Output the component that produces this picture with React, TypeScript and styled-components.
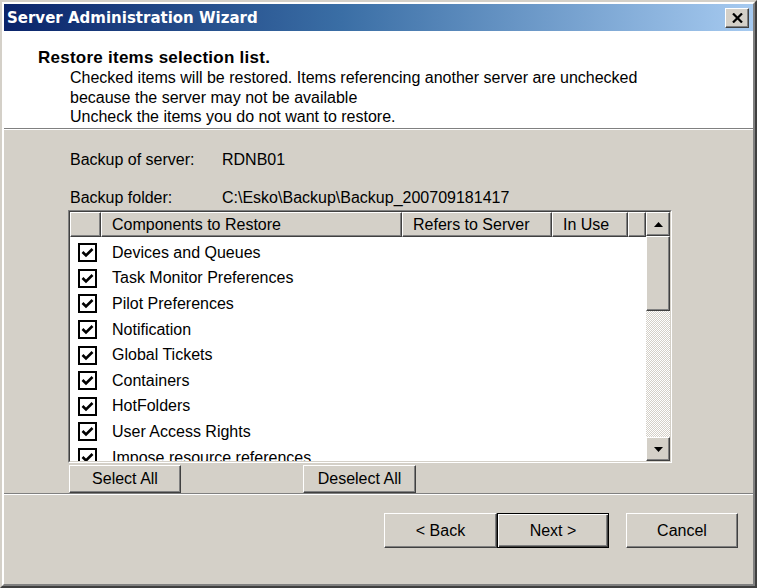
import React from "react";
import styled, { createGlobalStyle, css } from "styled-components";

const GlobalStyle = createGlobalStyle`
  html, body { margin: 0; padding: 0; background: #d4d0c8; }
  * { box-sizing: border-box; }
  body { font-family: "Liberation Sans", Arial, sans-serif; }
`;

const raisedEdge = css`
  background: #d4d0c8;
  border: 1px solid;
  border-color: #ffffff #404040 #404040 #ffffff;
  box-shadow: inset -1px -1px #808080;
`;

const Frame = styled.div`
  width: 757px;
  height: 588px;
  border: 2px solid;
  border-color: #d4d0c8 #404040 #404040 #d4d0c8;
  background: #d4d0c8;
`;

const FrameInner = styled.div`
  height: 100%;
  border: 2px solid;
  border-color: #ffffff #808080 #808080 #ffffff;
  display: flex;
  flex-direction: column;
`;

const TitleBar = styled.div`
  height: 27px;
  flex: none;
  display: flex;
  align-items: center;
  justify-content: space-between;
  padding: 0 4px 0 3px;
  background: linear-gradient(to right, #0a246a 0%, #3a6ea5 45%, #a6caf0 100%);
`;

const TitleText = styled.span`
  font-family: "DejaVu Sans", Verdana, sans-serif;
  font-weight: bold;
  font-size: 15px;
  color: #ffffff;
  white-space: nowrap;
`;

const CloseButton = styled.div`
  ${raisedEdge};
  width: 24px;
  height: 20px;
  display: flex;
  align-items: center;
  justify-content: center;
`;

const Header = styled.div`
  height: 97px;
  flex: none;
  background: #ffffff;
  padding: 17px 0 0 34px;
  color: #000;
`;

const HeaderTitle = styled.div`
  font-weight: bold;
  font-size: 17px;
  line-height: 20px;
  letter-spacing: 0.25px;
`;

const HeaderDesc = styled.div`
  padding-left: 32px;
  font-size: 16px;
  line-height: 19.5px;
`;

const Separator = styled.div`
  height: 2px;
  flex: none;
  border-top: 1px solid #808080;
  border-bottom: 1px solid #ffffff;
`;

const Body = styled.div`
  flex: 1;
  display: flex;
  flex-direction: column;
  align-items: flex-start;
  padding: 21px 0 0 64px;
`;

const InfoRow = styled.div<{ $gap?: number }>`
  display: grid;
  grid-template-columns: 152px auto;
  padding-left: 2px;
  margin-top: ${(p) => p.$gap ?? 0}px;
  font-size: 16px;
  line-height: 18px;
  color: #000;
  white-space: nowrap;
`;

const ListOuter = styled.div`
  margin-top: 3px;
  width: 604px;
  height: 253px;
  border: 1px solid;
  border-color: #808080 #ffffff #ffffff #808080;
`;

const ListInner = styled.div`
  height: 100%;
  border: 1px solid;
  border-color: #404040 #d4d0c8 #d4d0c8 #404040;
  background: #ffffff;
  display: flex;
  overflow: hidden;
`;

const ListContent = styled.div`
  flex: 1;
  display: flex;
  flex-direction: column;
  min-width: 0;
`;

const HeaderRow = styled.div`
  height: 25px;
  flex: none;
  display: grid;
  grid-template-columns: 31px 301px 150px 76px 1fr;
`;

const HeaderCell = styled.div`
  ${raisedEdge};
  padding-left: 10px;
  font-size: 16px;
  line-height: 23px;
  color: #000;
  white-space: nowrap;
  overflow: hidden;
`;

const Rows = styled.div`
  flex: 1;
  overflow: hidden;
  padding-top: 3px;
`;

const Row = styled.div`
  height: 25.6px;
  display: flex;
  align-items: center;
  padding-left: 8px;
  font-size: 16px;
  color: #000;
  white-space: nowrap;
`;

const CheckBox = styled.div`
  width: 19px;
  height: 19px;
  flex: none;
  border: 2px solid #000;
  background: #fff;
  margin-right: 15px;
  display: flex;
  align-items: center;
  justify-content: center;
`;

const ScrollBar = styled.div`
  width: 24px;
  flex: none;
  display: flex;
  flex-direction: column;
  background-color: #ffffff;
  background-image: conic-gradient(#d4d0c8 25%, transparent 0 50%, #d4d0c8 0 75%, transparent 0);
  background-size: 2px 2px;
`;

const ScrollButton = styled.div`
  ${raisedEdge};
  width: 24px;
  height: 24px;
  flex: none;
  display: flex;
  align-items: center;
  justify-content: center;
`;

const Thumb = styled.div`
  ${raisedEdge};
  width: 24px;
  height: 75px;
  flex: none;
`;

const Track = styled.div`
  flex: 1;
`;

const ButtonRow = styled.div`
  margin-top: 2px;
  margin-left: 1px;
  display: flex;
  gap: 122px;
`;

const Button = styled.div<{ $w: number; $h: number; $default?: boolean }>`
  width: ${(p) => p.$w}px;
  height: ${(p) => p.$h}px;
  flex: none;
  display: flex;
  align-items: center;
  justify-content: center;
  font-size: 16px;
  color: #000;
  background: #d4d0c8;
  white-space: nowrap;
  ${(p) =>
    p.$default
      ? css`
          border: 1px solid #000;
          box-shadow: inset 1px 1px #ffffff, inset -1px -1px #404040, inset -2px -2px #808080;
        `
      : css`
          border: 1px solid;
          border-color: #ffffff #404040 #404040 #ffffff;
          box-shadow: inset -1px -1px #808080;
        `}
`;

const Footer = styled.div`
  flex: 1;
  display: flex;
  justify-content: flex-end;
  align-items: flex-start;
  padding: 18px 15px 0 0;
`;

const CancelWrap = styled.div`
  margin-left: 17px;
`;

const CheckMark = () => (
  <svg width="13" height="11" viewBox="0 0 13 11">
    <path d="M1.5 5 L5 8.5 L11.5 2" fill="none" stroke="#000" strokeWidth="2.6" />
  </svg>
);

const ArrowUp = () => (
  <svg width="9" height="5" viewBox="0 0 9 5">
    <path d="M4.5 0 L9 5 L0 5 Z" fill="#000" />
  </svg>
);

const ArrowDown = () => (
  <svg width="9" height="5" viewBox="0 0 9 5">
    <path d="M0 0 L9 0 L4.5 5 Z" fill="#000" />
  </svg>
);

const CloseIcon = () => (
  <svg width="11" height="10" viewBox="0 0 11 10">
    <path d="M1 0.5 L10 9.5 M10 0.5 L1 9.5" stroke="#000" strokeWidth="2.2" />
  </svg>
);

const items = [
  "Devices and Queues",
  "Task Monitor Preferences",
  "Pilot Preferences",
  "Notification",
  "Global Tickets",
  "Containers",
  "HotFolders",
  "User Access Rights",
  "Impose resource references",
];

export default function App() {
  return (
    <>
      <GlobalStyle />
      <Frame>
        <FrameInner>
          <TitleBar>
            <TitleText>Server Administration Wizard</TitleText>
            <CloseButton>
              <CloseIcon />
            </CloseButton>
          </TitleBar>
          <Header>
            <HeaderTitle>Restore items selection list.</HeaderTitle>
            <HeaderDesc>
              Checked items will be restored. Items referencing another server are unchecked
              <br />
              because the server may not be available
              <br />
              Uncheck the items you do not want to restore.
            </HeaderDesc>
          </Header>
          <Separator />
          <Body>
            <InfoRow>
              <span>Backup of server:</span>
              <span>RDNB01</span>
            </InfoRow>
            <InfoRow $gap={20}>
              <span>Backup folder:</span>
              <span>C:\Esko\Backup\Backup_200709181417</span>
            </InfoRow>
            <ListOuter>
              <ListInner>
                <ListContent>
                  <HeaderRow>
                    <HeaderCell />
                    <HeaderCell>Components to Restore</HeaderCell>
                    <HeaderCell>Refers to Server</HeaderCell>
                    <HeaderCell>In Use</HeaderCell>
                    <HeaderCell />
                  </HeaderRow>
                  <Rows>
                    {items.map((it) => (
                      <Row key={it}>
                        <CheckBox>
                          <CheckMark />
                        </CheckBox>
                        {it}
                      </Row>
                    ))}
                  </Rows>
                </ListContent>
                <ScrollBar>
                  <ScrollButton>
                    <ArrowUp />
                  </ScrollButton>
                  <Thumb />
                  <Track />
                  <ScrollButton>
                    <ArrowDown />
                  </ScrollButton>
                </ScrollBar>
              </ListInner>
            </ListOuter>
            <ButtonRow>
              <Button $w={112} $h={28}>Select All</Button>
              <Button $w={113} $h={28}>Deselect All</Button>
            </ButtonRow>
          </Body>
          <Separator />
          <Footer>
            <Button $w={113} $h={35}>&lt; Back</Button>
            <Button $w={112} $h={35} $default>Next &gt;</Button>
            <CancelWrap>
              <Button $w={112} $h={35}>Cancel</Button>
            </CancelWrap>
          </Footer>
        </FrameInner>
      </Frame>
    </>
  );
}
